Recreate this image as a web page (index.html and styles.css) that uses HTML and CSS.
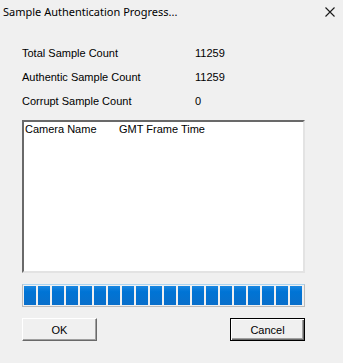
FILE: index.html
```html
<!DOCTYPE html>
<html lang="en">
<head>
    <meta charset="UTF-8">
    <title>Sample Authentication Progress...</title>
    <link rel="stylesheet" href="styles.css">
</head>
<body>
    <div class="dialog">
        <div class="title-bar">
            <div class="title">Sample Authentication Progress...</div>
            <svg class="close-icon" width="10" height="10" viewBox="0 0 10 10">
                <path d="M0.5 0.5 L9.5 9.5 M9.5 0.5 L0.5 9.5" stroke="#1a1a1a" stroke-width="1.1" fill="none"/>
            </svg>
        </div>
        <div class="content">
            <div class="stats">
                <div class="stat-row">
                    <span class="stat-label">Total Sample Count</span>
                    <span class="stat-value">11259</span>
                </div>
                <div class="stat-row">
                    <span class="stat-label">Authentic Sample Count</span>
                    <span class="stat-value">11259</span>
                </div>
                <div class="stat-row">
                    <span class="stat-label">Corrupt Sample Count</span>
                    <span class="stat-value">0</span>
                </div>
            </div>
            <div class="list-box">
                <div class="list-header">
                    <span class="col-camera">Camera Name</span>
                    <span class="col-time">GMT Frame Time</span>
                </div>
            </div>
            <div class="progress" id="progress"></div>
            <div class="buttons">
                <button class="btn">OK</button>
                <button class="btn btn-default">Cancel</button>
            </div>
        </div>
    </div>

    <script>
        // Fill the progress bar with blocks
        const progress = document.getElementById('progress');
        for (let i = 0; i < 20; i++) {
            const block = document.createElement('div');
            block.classList.add('block');
            progress.appendChild(block);
        }
    </script>
</body>
</html>
```

FILE: styles.css
```css
body {
    margin: 0;
    background-color: #f0f0f0;
    font-family: "Liberation Sans", Arial, sans-serif;
    font-size: 11px;
    color: #000;
}

.dialog {
    width: 343px;
    height: 363px;
    background-color: #f0f0f0;
}

.title-bar {
    height: 30px;
    display: flex;
    justify-content: space-between;
    align-items: flex-start;
}

.title {
    font-family: "Noto Sans", "Liberation Sans", sans-serif;
    font-size: 11px;
    padding: 4px 0 0 3px;
    color: #000;
}

.close-icon {
    margin: 7px 8px 0 0;
}

.content {
    padding: 0 38px 0 22px;
}

.stats {
    padding-top: 16px;
}

.stat-row {
    display: flex;
    height: 24px;
    line-height: 14px;
}

.stat-label {
    width: 173px;
}

.list-box {
    margin-top: 2px;
    height: 149px;
    background-color: #fff;
    border-top: 2px solid #696969;
    border-left: 2px solid #696969;
    border-right: 2px solid #e3e3e3;
    border-bottom: 2px solid #e3e3e3;
}

.list-header {
    display: flex;
    padding: 1px 0 0 1px;
}

.col-camera {
    width: 94px;
}

.progress {
    margin-top: 11px;
    height: 19px;
    border: 1px solid #bcbcbc;
    border-top-color: #a9d4f2;
    background-color: #f0f0f0;
    display: flex;
    gap: 2px;
    padding: 1px 0 1px 1px;
}

.block {
    width: 12px;
    background: linear-gradient(#1886e0, #0074d5 30%, #0a6fca);
}

.buttons {
    display: flex;
    justify-content: space-between;
    margin-top: 11px;
}

.btn {
    width: 75px;
    height: 23px;
    background-color: #f0f0f0;
    font-family: "Liberation Sans", Arial, sans-serif;
    font-size: 11px;
    color: #000;
    padding: 0;
    border-top: 1px solid #fff;
    border-left: 1px solid #fff;
    border-right: 1px solid #696969;
    border-bottom: 1px solid #696969;
    box-shadow: inset -1px -1px 0 #a0a0a0;
}

.btn-default {
    border: 1px solid #000;
    box-shadow: inset 1px 1px 0 #fff, inset -1px -1px 0 #696969, inset -2px -2px 0 #a0a0a0;
}
```
